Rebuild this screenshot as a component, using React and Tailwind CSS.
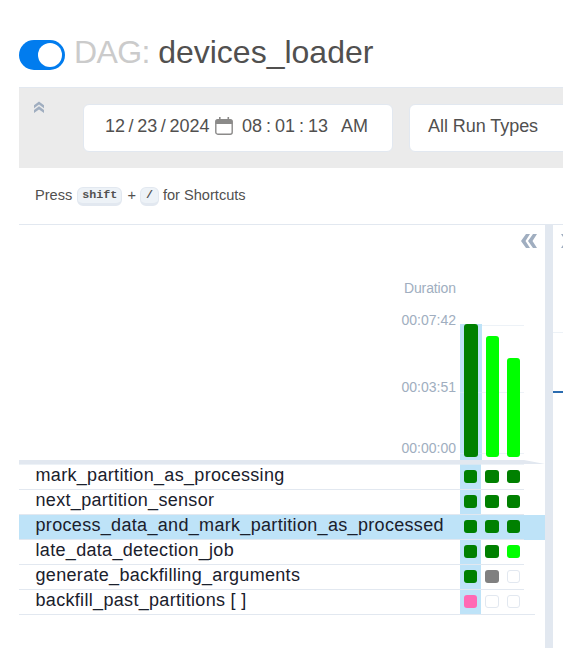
const tasks = [
  { name: 'mark_partition_as_processing', runs: ['success', 'success', 'success'] },
  { name: 'next_partition_sensor', runs: ['success', 'success', 'success'] },
  { name: 'process_data_and_mark_partition_as_processed', runs: ['success', 'success', 'success'], hovered: true },
  { name: 'late_data_detection_job', runs: ['success', 'success', 'running'] },
  { name: 'generate_backfilling_arguments', runs: ['success', 'queued', 'none'] },
  { name: 'backfill_past_partitions [ ]', runs: ['skipped', 'none', 'none'] },
];

const stateClass = {
  success: 'bg-[#008000]',
  running: 'bg-[#00ff00]',
  queued: 'bg-[#808080]',
  skipped: 'bg-[#ff69b4]',
  none: 'bg-white border border-[#e2e8f0]',
};

function DoubleChevron({ className }) {
  return (
    <svg className={className} viewBox="0 0 16 14" fill="currentColor">
      <path d="M5 0H9L4.5 7 9 14H5L0 7zM12 0h4l-4.5 7 4.5 7h-4L7 7z" />
    </svg>
  );
}

function Header() {
  return (
    <header className="flex h-[87px] items-start pl-[19px] pt-[40px]">
      <div className="flex h-[30px] w-[46px] items-center justify-end rounded-full bg-[#017cee] pr-[3px]">
        <span className="size-[24px] rounded-full bg-white" />
      </div>
      <h1 className="-mt-[6px] ml-[9px] whitespace-pre text-[32px] leading-9 text-[#51504f]">
        <span className="tracking-[-0.6px] text-[#cbcbcb]">DAG: </span>devices_loader
      </h1>
    </header>
  );
}

function Filters() {
  return (
    <section className="ml-[19px] flex h-[81px] items-start border-t border-[#e2e8f0] bg-[#ebebeb] text-lg text-[#51504f]">
      <svg className="ml-[15px] mt-[13px] h-[12px] w-[10px] shrink-0 text-[#a0aec0]" viewBox="0 0 10 12" fill="currentColor">
        <path d="M0 4.2 5 0.4l5 3.8v3L5 3.6 0 7.2zM0 9l5-3.8L10 9v3L5 8.4 0 12z" />
      </svg>
      <div className="ml-[39px] mt-[16px] flex h-[48px] w-[310px] shrink-0 items-center whitespace-pre rounded-md border border-[#e2e8f0] bg-white pb-[5px] pl-[21px]">
        <span className="w-[106px] [word-spacing:-1.4px]">12 / 23 / 2024</span>
        <svg className="ml-[4px] h-[18px] w-[18px]" viewBox="0 0 18 18" fill="none">
          <rect x="0.8" y="2.7" width="16.4" height="14.5" rx="2" stroke="#8b8a89" strokeWidth="1.4" />
          <path d="M0.5 7V4.5a2 2 0 0 1 2-2h13a2 2 0 0 1 2 2V7zM4 0h1.6v3H4zM12.5 0h1.6v3h-1.6z" fill="#8b8a89" />
        </svg>
        <span className="ml-[9px] w-[86px] [word-spacing:-1px]">08 : 01 : 13</span>
        <span className="ml-[13px]">AM</span>
      </div>
      <div className="ml-[16px] mt-[16px] flex h-[48px] w-[220px] shrink-0 items-center rounded-md border border-[#e2e8f0] bg-white pb-[5px] pl-[18px] tracking-[-0.05px]">
        All Run Types
      </div>
    </section>
  );
}

function Key({ children }) {
  return (
    <kbd className="flex h-[19px] items-center rounded-md border border-b-[3px] border-[#e2e8f0] bg-[#edf2f7] px-[4px] pt-[2px] font-['Liberation_Mono',monospace] text-[11.7px] font-bold leading-none">
      {children}
    </kbd>
  );
}

function Shortcuts() {
  return (
    <div className="ml-[19px] flex h-[57px] items-center border-b border-[#e2e8f0] pl-[16px] text-[14.6px] text-[#51504f]">
      <span className="mr-[5px]">Press</span>
      <Key>shift</Key>
      <span className="ml-[5px] mr-[4px]">+</span>
      <Key><span className="px-[1px]">/</span></Key>
      <span className="ml-[4px]">for Shortcuts</span>
    </div>
  );
}

function DurationChart() {
  return (
    <div className="flex h-[235px] flex-col">
      <DoubleChevron className="ml-[502px] mt-[9px] h-[14px] w-[16px] shrink-0 text-[#a0aec0]" />
      <div className="mt-auto flex">
        <div className="flex h-[181px] w-[437px] flex-col items-end text-[14px] leading-[18px] text-[#a0aec0]">
          <span className="tracking-[-0.1px]">Duration</span>
          <span className="mt-[14px]">00:07:42</span>
          <span className="mt-[49px]">00:03:51</span>
          <span className="mt-[43px]">00:00:00</span>
        </div>
        <div className="relative ml-[4px] mt-[45px] flex h-[136px] w-[64px]">
          <i className="absolute left-0 top-[1px] h-px w-full bg-[#edf2f7]" />
          <i className="absolute left-0 top-[68px] h-px w-full bg-[#edf2f7]" />
          <i className="absolute left-0 top-[129px] h-px w-full bg-[#edf2f7]" />
          <div className="relative flex w-[22px] items-end bg-[#bee3f8] pb-[3px] pl-[4px]">
            <i className="absolute left-0 top-[68px] h-px w-full bg-[#cfe7f8]" />
            <i className="absolute left-0 top-[129px] h-px w-full bg-[#cfe7f8]" />
            <span className="relative h-[133px] w-[14px] rounded-[3px] bg-[#008000]" />
          </div>
          <div className="relative flex items-end gap-[8px] pb-[3px] pl-[4px]">
            <span className="h-[121px] w-[13px] rounded-[3px] bg-[#00ff00]" />
            <span className="h-[99px] w-[13px] rounded-[3px] bg-[#00ff00]" />
          </div>
        </div>
      </div>
    </div>
  );
}

function TaskRow({ task, last }) {
  return (
    <div className={task.hovered ? 'flex h-[25px] bg-[#bee3f8]' : 'flex h-[25px]'}>
      <div className={last ? 'flex w-[516px] border-b border-[#e2e8f0]' : 'flex w-[505px] border-b border-[#e2e8f0]'}>
        <div className="w-[441px] whitespace-pre pl-[16.5px] text-lg leading-[20px] tracking-[0.32px] text-[#1a202c]">
          {task.name}
        </div>
        <div className="flex w-[21px] items-start bg-[#bee3f8] pl-[4px] pt-[5px]">
          <span className={`h-[13px] w-[13px] rounded-[3px] ${stateClass[task.runs[0]]}`} />
        </div>
        <div className="flex gap-[8px] pl-[4px] pt-[5px]">
          <span className={`h-[13px] w-[14px] rounded-[3px] ${stateClass[task.runs[1]]}`} />
          <span className={`h-[13px] w-[13px] rounded-[3px] ${stateClass[task.runs[2]]}`} />
        </div>
      </div>
    </div>
  );
}

export default function App() {
  return (
    <main className="flex h-[648px] w-[563px] flex-col overflow-hidden bg-white font-['Liberation_Sans',Arial,sans-serif]">
      <Header />
      <Filters />
      <Shortcuts />
      <div className="ml-[19px] flex flex-1">
        <section className="w-[526px] shrink-0">
          <DurationChart />
          <svg className="block h-[5px] w-[526px]" viewBox="0 0 526 5">
            <path d="M0 0H505L526 4H0z" fill="#e2e8f0" />
            <path d="M0 4h505v1H0z" fill="#edf2f7" />
            <path d="M441 4h21v1h-21z" fill="#d7e7f3" />
          </svg>
          {tasks.map((task, i) => (
            <TaskRow key={task.name} task={task} last={i === tasks.length - 1} />
          ))}
        </section>
        <div className="w-[8px] shrink-0 bg-[#e2e8f0]" />
        <aside className="flex w-[10px] flex-col overflow-hidden">
          <DoubleChevron className="ml-[8px] mt-[9px] h-[14px] w-[16px] shrink-0 rotate-180 text-[#a0aec0]" />
          <i className="mt-[84px] h-px bg-[#edf2f7]" />
          <i className="mt-[58px] h-[2px] bg-[#2b6cb0]" />
        </aside>
      </div>
    </main>
  );
}
